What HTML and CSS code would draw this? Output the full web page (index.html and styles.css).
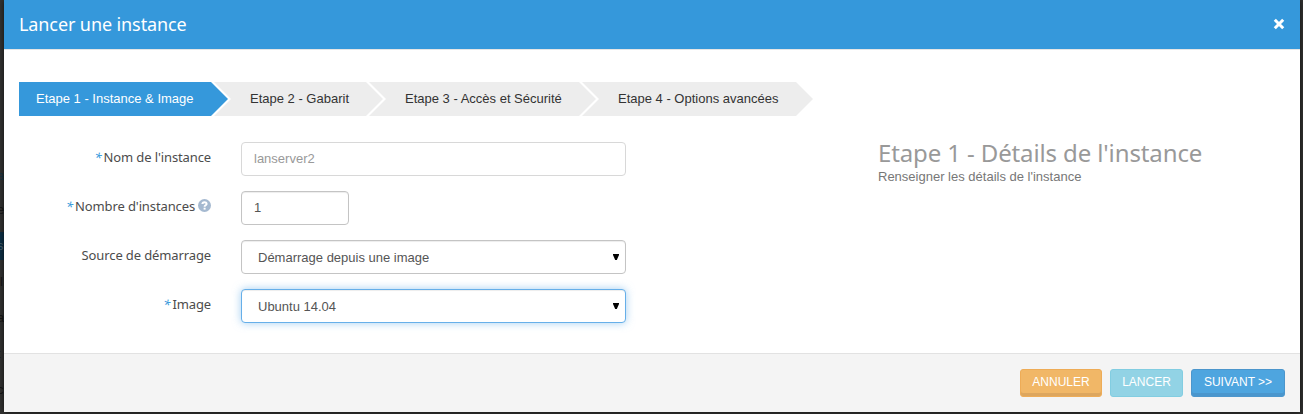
FILE: index.html
```
<!DOCTYPE html>
<html lang="fr">
<head>
<meta charset="utf-8">
<title>Lancer une instance</title>
<link rel="stylesheet" href="styles.css">
</head>
<body>
<nav class="backdrop">
  <span class="link">a</span><span>e</span><span class="active">si</span><span class="bar">l</span><span>a</span><span>t</span><span>c</span>
</nav>
<main class="modal">
  <header class="modal-header">
    <h1>Lancer une instance</h1>
    <svg class="close" viewBox="0 0 12 12" width="12" height="12"><path d="M1.8 1.8L10.2 10.2M10.2 1.8L1.8 10.2"/></svg>
  </header>
  <section class="modal-body">
    <ol class="steps">
      <li class="step current">Etape 1 - Instance &amp; Image</li>
      <li class="step gabarit">Etape 2 - Gabarit</li>
      <li class="step access">Etape 3 - Accès et Sécurité</li>
      <li class="step options">Etape 4 - Options avancées</li>
    </ol>
    <div class="columns">
      <form class="form">
        <div class="row">
          <div class="label"><i>*</i><span>Nom de l'instance</span></div>
          <div class="field muted">lanserver2</div>
        </div>
        <div class="row">
          <div class="label"><i>*</i><span>Nombre d'instances</span>
            <svg class="help" viewBox="0 0 13 13" width="13" height="13"><circle cx="6.5" cy="6.5" r="6.5" fill="#a5b9d0"/><path d="M4.4 5.1C4.4 2.6 8.6 2.6 8.6 5C8.6 6.3 6.6 6.2 6.6 7.7" fill="none" stroke="#fff" stroke-width="2"/><path d="M5.6 8.7h2v1.9h-2z" fill="#fff"/></svg>
          </div>
          <div class="field short">1</div>
        </div>
        <div class="row">
          <div class="label"><span>Source de démarrage</span></div>
          <div class="field select">Démarrage depuis une image<svg class="arrow" viewBox="0 0 6 6" width="6" height="6"><path d="M0 0h6v1L3.8 6H2.2L0 1z"/></svg></div>
        </div>
        <div class="row">
          <div class="label"><i>*</i><span>Image</span></div>
          <div class="field select focus">Ubuntu 14.04<svg class="arrow" viewBox="0 0 6 6" width="6" height="6"><path d="M0 0h6v1L3.8 6H2.2L0 1z"/></svg></div>
        </div>
      </form>
      <aside class="info">
        <h2>Etape 1 - Détails de l'instance</h2>
        <p>Renseigner les détails de l'instance</p>
      </aside>
    </div>
  </section>
  <footer class="modal-footer">
    <button class="btn cancel">ANNULER</button>
    <button class="btn launch">LANCER</button>
    <button class="btn next">SUIVANT &gt;&gt;</button>
  </footer>
</main>
</body>
</html>
```
FILE: styles.css
```
* { box-sizing: border-box; }
body {
  margin: 0;
  height: 414px;
  overflow: hidden;
  display: flex;
  background: #333332;
  font: 13px/20px "Liberation Sans", Arial, sans-serif;
  color: #333;
}
.backdrop {
  width: 4px;
  height: 414px;
  flex: none;
  padding-top: 162px;
  overflow: hidden;
  display: flex;
  flex-direction: column;
  color: #171717;
}
.backdrop span {
  flex: none;
  height: 36px;
  line-height: 28px;
  margin-left: -3px;
}
.backdrop .link { color: #183646; height: 34px; }
.backdrop .bar { margin-left: 0; }
.backdrop .active {
  height: 28px;
  margin-bottom: 8px;
  background: #0d3046;
  color: #50646f;
}
.modal {
  width: 1296px;
  height: 412px;
  flex: none;
  display: flex;
  flex-direction: column;
  background: #fff;
  box-shadow: 0 0 6px rgba(0, 0, 0, .7);
}
.modal-header {
  height: 50px;
  flex: none;
  padding: 0 15px 2px;
  display: flex;
  align-items: center;
  justify-content: space-between;
  background: #3598db;
  border-bottom: 1px solid #e5e5e5;
}
h1, h2, p, ol { margin: 0; padding: 0; font-weight: normal; }
h1 {
  font: 18px/24px "Noto Sans", sans-serif;
  letter-spacing: -.1px;
  color: #fff;
  white-space: nowrap;
}
.close { fill: none; stroke: #fff; stroke-width: 3; }
.modal-body { flex: 1; padding: 32px 15px 0; }
.steps { display: flex; height: 34px; list-style: none; }
.step {
  height: 34px;
  flex: none;
  line-height: 34px;
  white-space: nowrap;
  background: #ededed;
  clip-path: polygon(0 0, calc(100% - 17px) 0, 100% 50%, calc(100% - 17px) 100%, 0 100%, 17px 50%);
}
.step.current {
  width: 209px;
  padding-left: 17px;
  background: #3598db;
  color: #fff;
  clip-path: polygon(0 0, calc(100% - 17px) 0, 100% 50%, calc(100% - 17px) 100%, 0 100%);
}
.gabarit { width: 169px; margin-left: -14px; padding-left: 36px; }
.access { width: 227px; margin-left: -14px; padding-left: 36px; }
.options { width: 231px; margin-left: -14px; padding-left: 36px; }
.columns { display: flex; padding-top: 26px; }
.form { width: 859px; flex: none; display: grid; gap: 15px; }
.row { display: flex; height: 34px; }
.label {
  width: 192px;
  margin-right: 30px;
  display: flex;
  justify-content: flex-end;
  font: 13px/30px "Noto Sans", sans-serif;
  letter-spacing: -.12px;
  color: #4c4c4c;
  white-space: nowrap;
}
.label i { color: #3598db; margin-right: 2px; }
.help { margin: 8px 0 0 3px; }
.field {
  width: 385px;
  height: 34px;
  padding: 0 6px 0 12px;
  border: 1px solid #c4c4c4;
  border-radius: 4px;
  line-height: 32px;
  color: #555;
  background: #fff;
  box-shadow: inset 0 1px 1px rgba(0, 0, 0, .075);
}
.field.muted { border-color: #d8d8d8; color: #999; box-shadow: none; }
.field.short { width: 108px; }
.field.select {
  padding-left: 16px;
  padding-top: 1px;
  display: flex;
  justify-content: space-between;
}
.field.focus {
  border-color: #66afe9;
  box-shadow: inset 0 1px 1px rgba(0, 0, 0, .075), 0 0 8px rgba(102, 175, 233, .6);
}
.arrow { margin-top: 12px; fill: #000; }
.info { margin-top: -1px; }
.info h2 {
  height: 27px;
  font: 24px/24px "Noto Sans", sans-serif;
  letter-spacing: -.12px;
  color: #999;
  white-space: nowrap;
}
.info p { line-height: 18px; color: #777; }
.modal-footer {
  height: 59px;
  flex: none;
  padding: 15px 15px 0;
  display: flex;
  justify-content: flex-end;
  gap: 8px;
  background: #f4f4f4;
  border-top: 1px solid #e2e2e2;
}
.btn {
  height: 28px;
  padding: 0 0 2px;
  border: 1px solid;
  border-radius: 3px;
  font: 12px/18px "Liberation Sans", Arial, sans-serif;
  color: #fff;
}
.cancel { width: 82px; background: #f1b767; border-color: #eeac57; box-shadow: inset 0 -3px #dda65e; }
.launch { width: 73px; background: #92d3e5; border-color: #82cde1; }
.next { width: 94px; background: #4ea5df; border-color: #4c96cc; box-shadow: inset 0 -3px #4a96cd; }
```
